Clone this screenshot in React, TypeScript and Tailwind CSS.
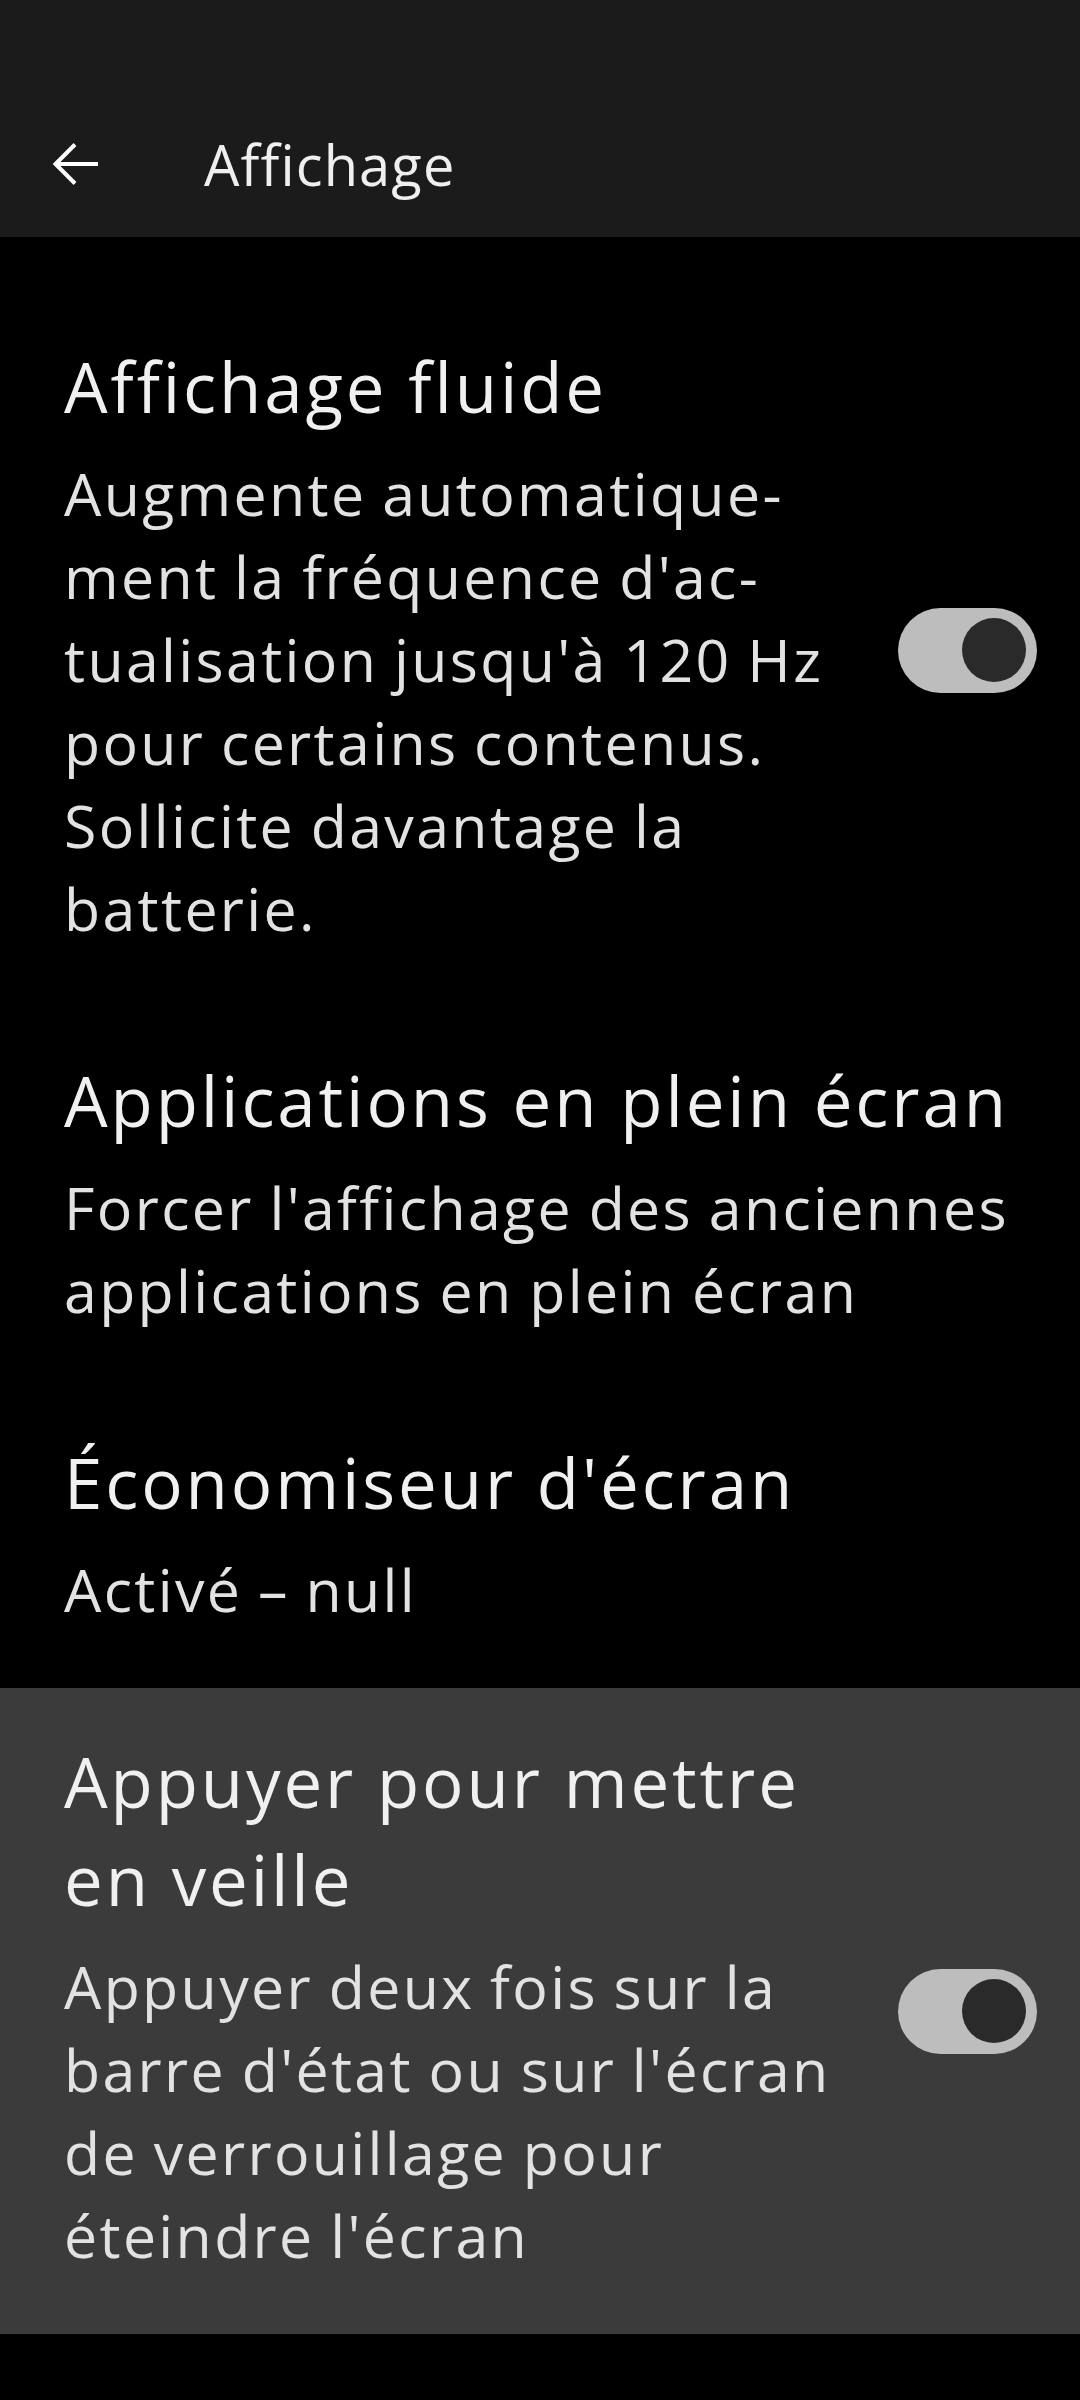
type Item = {
  title: string[];
  desc: string[];
  toggle?: boolean;
  highlighted?: boolean;
};

const items: Item[] = [
  {
    title: ["Affichage fluide"],
    desc: [
      "Augmente automatique-",
      "ment la fréquence d'ac-",
      "tualisation jusqu'à 120 Hz",
      "pour certains contenus.",
      "Sollicite davantage la",
      "batterie.",
    ],
    toggle: true,
  },
  {
    title: ["Applications en plein écran"],
    desc: ["Forcer l'affichage des anciennes", "applications en plein écran"],
  },
  {
    title: ["Économiseur d'écran"],
    desc: ["Activé – null"],
  },
  {
    title: ["Appuyer pour mettre", "en veille"],
    desc: [
      "Appuyer deux fois sur la",
      "barre d'état ou sur l'écran",
      "de verrouillage pour",
      "éteindre l'écran",
    ],
    toggle: true,
    highlighted: true,
  },
];

function Toggle() {
  return (
    <div className="mr-[43px] flex h-[85px] w-[139px] shrink-0 items-center justify-end rounded-full bg-[#bdbdbd] pr-[11px]">
      <div className="h-[64px] w-[64px] rounded-full bg-[#2a2a2a]" />
    </div>
  );
}

function SettingRow({ item }: { item: Item }) {
  return (
    <div className={`flex items-center ${item.highlighted ? "bg-[#3b3b3b]" : ""}`}>
      <div className="flex-1 pb-[57px] pl-[64px] pt-[44px]">
        <div className="text-[69px] leading-[98px] tracking-[0.042em] text-[#f0f0f0]">
          {item.title.map((t) => (
            <span key={t} className="block whitespace-nowrap">
              {t}
            </span>
          ))}
        </div>
        <div className="mt-[17px] text-[59px] leading-[83px] tracking-[0.04em] [word-spacing:-2px] text-[#e2e2e2]">
          {item.desc.map((d) => (
            <span key={d} className="block whitespace-nowrap">
              {d}
            </span>
          ))}
        </div>
      </div>
      {item.toggle && <Toggle />}
    </div>
  );
}

export default function App() {
  return (
    <div className="min-h-[2400px] w-full bg-black font-['Open_Sans',sans-serif]">
      <header className="flex h-[237px] items-end bg-[#1b1b1b]">
        <div className="flex h-[147px] items-center">
          <svg
            className="ml-[52px]"
            width="48"
            height="48"
            viewBox="0 0 48 48"
            fill="none"
            stroke="#ffffff"
            strokeWidth="4"
          >
            <path d="M46 24H4" />
            <path d="M23 4.5L3.5 24L23 43.5" />
          </svg>
          <h1 className="ml-[104px] text-[56px] leading-[72px] tracking-[0.02em] text-[#efefef]">
            Affichage
          </h1>
        </div>
      </header>

      <div className="pt-[56px]">
        {items.map((item) => (
          <SettingRow key={item.title[0]} item={item} />
        ))}
      </div>
    </div>
  );
}
